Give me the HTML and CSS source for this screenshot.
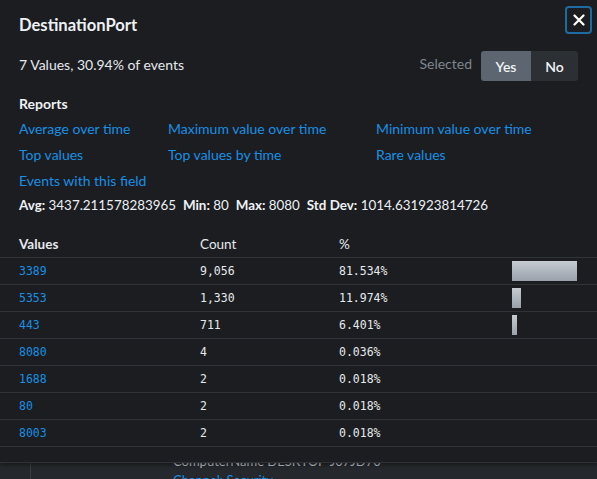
FILE: index.html
```html
<!DOCTYPE html>
<html>
<head>
<meta charset="utf-8">
<link rel="stylesheet" href="styles.css">
</head>
<body>
<div class="page">
  <div class="event">
    <div class="gutter"></div>
    <div class="event-body">
      <div class="event-line">ComputerName DESKTOP-J07JD70</div>
      <div class="event-line link">Channel: Security</div>
    </div>
  </div>
</div>
<div class="popup">
  <div class="head">
    <h1 class="title">DestinationPort</h1>
    <button class="close" aria-label="Close">
      <svg width="12" height="12" viewBox="0 0 12 12"><path d="M1.5 1.5 L10.5 10.5 M10.5 1.5 L1.5 10.5" stroke="#fff" stroke-width="2.2" stroke-linecap="round"/></svg>
    </button>
  </div>
  <div class="summary">
    <div class="count-text">7 Values, 30.94% of events</div>
    <div class="selected">
      <span class="sel-label">Selected</span>
      <div class="toggle">
        <span class="opt on">Yes</span>
        <span class="opt">No</span>
      </div>
    </div>
  </div>
  <div class="reports">
    <div class="reports-title">Reports</div>
    <div class="links">
      <a class="lnk">Average over time</a>
      <a class="lnk">Maximum value over time</a>
      <a class="lnk">Minimum value over time</a>
      <a class="lnk">Top values</a>
      <a class="lnk">Top values by time</a>
      <a class="lnk">Rare values</a>
      <a class="lnk">Events with this field</a>
    </div>
    <div class="stats">
      <b>Avg:</b> 3437.211578283965 &nbsp;<b>Min:</b> 80 &nbsp;<b>Max:</b> 8080 &nbsp;<b>Std Dev:</b> 1014.631923814726
    </div>
  </div>
  <div class="table">
    <div class="row hdr">
      <div class="c-val strong">Values</div>
      <div class="c-cnt">Count</div>
      <div class="c-pct">%</div>
      <div class="c-bar"></div>
    </div>
    <div class="row">
      <div class="c-val mono blue">3389</div>
      <div class="c-cnt mono">9,056</div>
      <div class="c-pct mono">81.534%</div>
      <div class="c-bar"><div class="bar" style="width:65px"></div></div>
    </div>
    <div class="row">
      <div class="c-val mono blue">5353</div>
      <div class="c-cnt mono">1,330</div>
      <div class="c-pct mono">11.974%</div>
      <div class="c-bar"><div class="bar" style="width:9px"></div></div>
    </div>
    <div class="row">
      <div class="c-val mono blue">443</div>
      <div class="c-cnt mono">711</div>
      <div class="c-pct mono">6.401%</div>
      <div class="c-bar"><div class="bar" style="width:5px"></div></div>
    </div>
    <div class="row">
      <div class="c-val mono blue">8080</div>
      <div class="c-cnt mono">4</div>
      <div class="c-pct mono">0.036%</div>
      <div class="c-bar"></div>
    </div>
    <div class="row">
      <div class="c-val mono blue">1688</div>
      <div class="c-cnt mono">2</div>
      <div class="c-pct mono">0.018%</div>
      <div class="c-bar"></div>
    </div>
    <div class="row">
      <div class="c-val mono blue">80</div>
      <div class="c-cnt mono">2</div>
      <div class="c-pct mono">0.018%</div>
      <div class="c-bar"></div>
    </div>
    <div class="row">
      <div class="c-val mono blue">8003</div>
      <div class="c-cnt mono">2</div>
      <div class="c-pct mono">0.018%</div>
      <div class="c-bar"></div>
    </div>
  </div>
</div>
</body>
</html>
```

FILE: styles.css
```css
* { box-sizing: border-box; }
html, body { margin: 0; padding: 0; }
body {
  width: 597px;
  height: 479px;
  overflow: hidden;
  background: #25282c;
  font-family: Lato, "Open Sans", sans-serif;
  color: #e6e9ec;
  position: relative;
}
.page {
  height: 479px;
  display: flex;
  flex-direction: column;
  justify-content: flex-end;
}
.event {
  display: flex;
  height: 40px;
}
.gutter {
  width: 31px;
  border-right: 1px solid #3a3e44;
}
.event-body {
  padding-left: 142px;
  padding-top: 13px;
  font-size: 13px;
  color: #b9bec4;
  line-height: 19px;
}
.event-line.link { color: #1a8fe3; }

.popup {
  position: absolute;
  left: 0;
  top: 0;
  width: 597px;
  height: 463px;
  background: #1b1d21;
  border-bottom: 1px solid #2e3136;
  box-shadow: 0 2px 4px rgba(0,0,0,0.4);
}
.head {
  display: flex;
  justify-content: space-between;
  align-items: flex-start;
  padding: 6px 5px 0 19px;
  height: 45px;
}
.title {
  margin: 8px 0 0 0;
  font-size: 16.6px;
  line-height: 22px;
  font-weight: 700;
  color: #eef1f4;
}
.close {
  width: 27px;
  height: 28px;
  border: 2px solid #1d6ba3;
  border-radius: 4px;
  background: #1b1d21;
  display: flex;
  align-items: center;
  justify-content: center;
  padding: 0;
}
.summary {
  display: flex;
  justify-content: space-between;
  align-items: center;
  padding: 0 19px 0 19px;
  height: 30px;
  margin-top: 6px;
}
.count-text {
  font-size: 14px;
  color: #e6e9ec;
  margin-top: -4px;
}
.selected {
  display: flex;
  align-items: center;
}
.sel-label {
  font-size: 14px;
  color: #7f868e;
  margin-right: 9px;
  margin-top: -6px;
}
.toggle {
  display: flex;
  height: 30px;
  border-radius: 3px;
  overflow: hidden;
}
.opt {
  display: flex;
  align-items: center;
  justify-content: center;
  font-size: 14px;
  font-weight: 600;
  color: #f2f4f6;
  background: #2c2f34;
  width: 47px;
}
.opt.on {
  background: #5c6570;
  width: 50px;
}
.reports {
  padding: 0 19px;
  margin-top: 15px;
}
.reports-title {
  font-size: 14px;
  font-weight: 700;
  line-height: 16px;
  color: #eef1f4;
}
.links {
  display: grid;
  grid-template-columns: 149px 208px auto;
  row-gap: 9px;
  margin-top: 8px;
}
.lnk {
  font-size: 14px;
  line-height: 17px;
  color: #1a8fe3;
}
.stats {
  margin-top: 8px;
  font-size: 13.4px;
  line-height: 17px;
  color: #eef1f4;
}
.stats b { font-weight: 700; }
.table {
  margin-top: 17px;
}
.row {
  display: flex;
  align-items: center;
  height: 27px;
  border-bottom: 1px solid #2f3338;
  padding: 0 20px 0 19px;
}
.row.hdr {
  font-size: 13.5px;
  color: #e6e9ec;
}
.strong { font-weight: 700; }
.c-val { width: 181px; }
.c-cnt { width: 139px; }
.c-pct { width: 173px; }
.c-bar { flex: 1; height: 20px; }
.mono {
  font-family: "DejaVu Sans Mono", monospace;
  font-size: 11.5px;
  color: #e6e9ec;
}
.mono.blue { color: #1a8fe3; }
.bar {
  height: 20px;
  background: linear-gradient(to bottom, #c6cbd2, #9aa1aa);
}
```
